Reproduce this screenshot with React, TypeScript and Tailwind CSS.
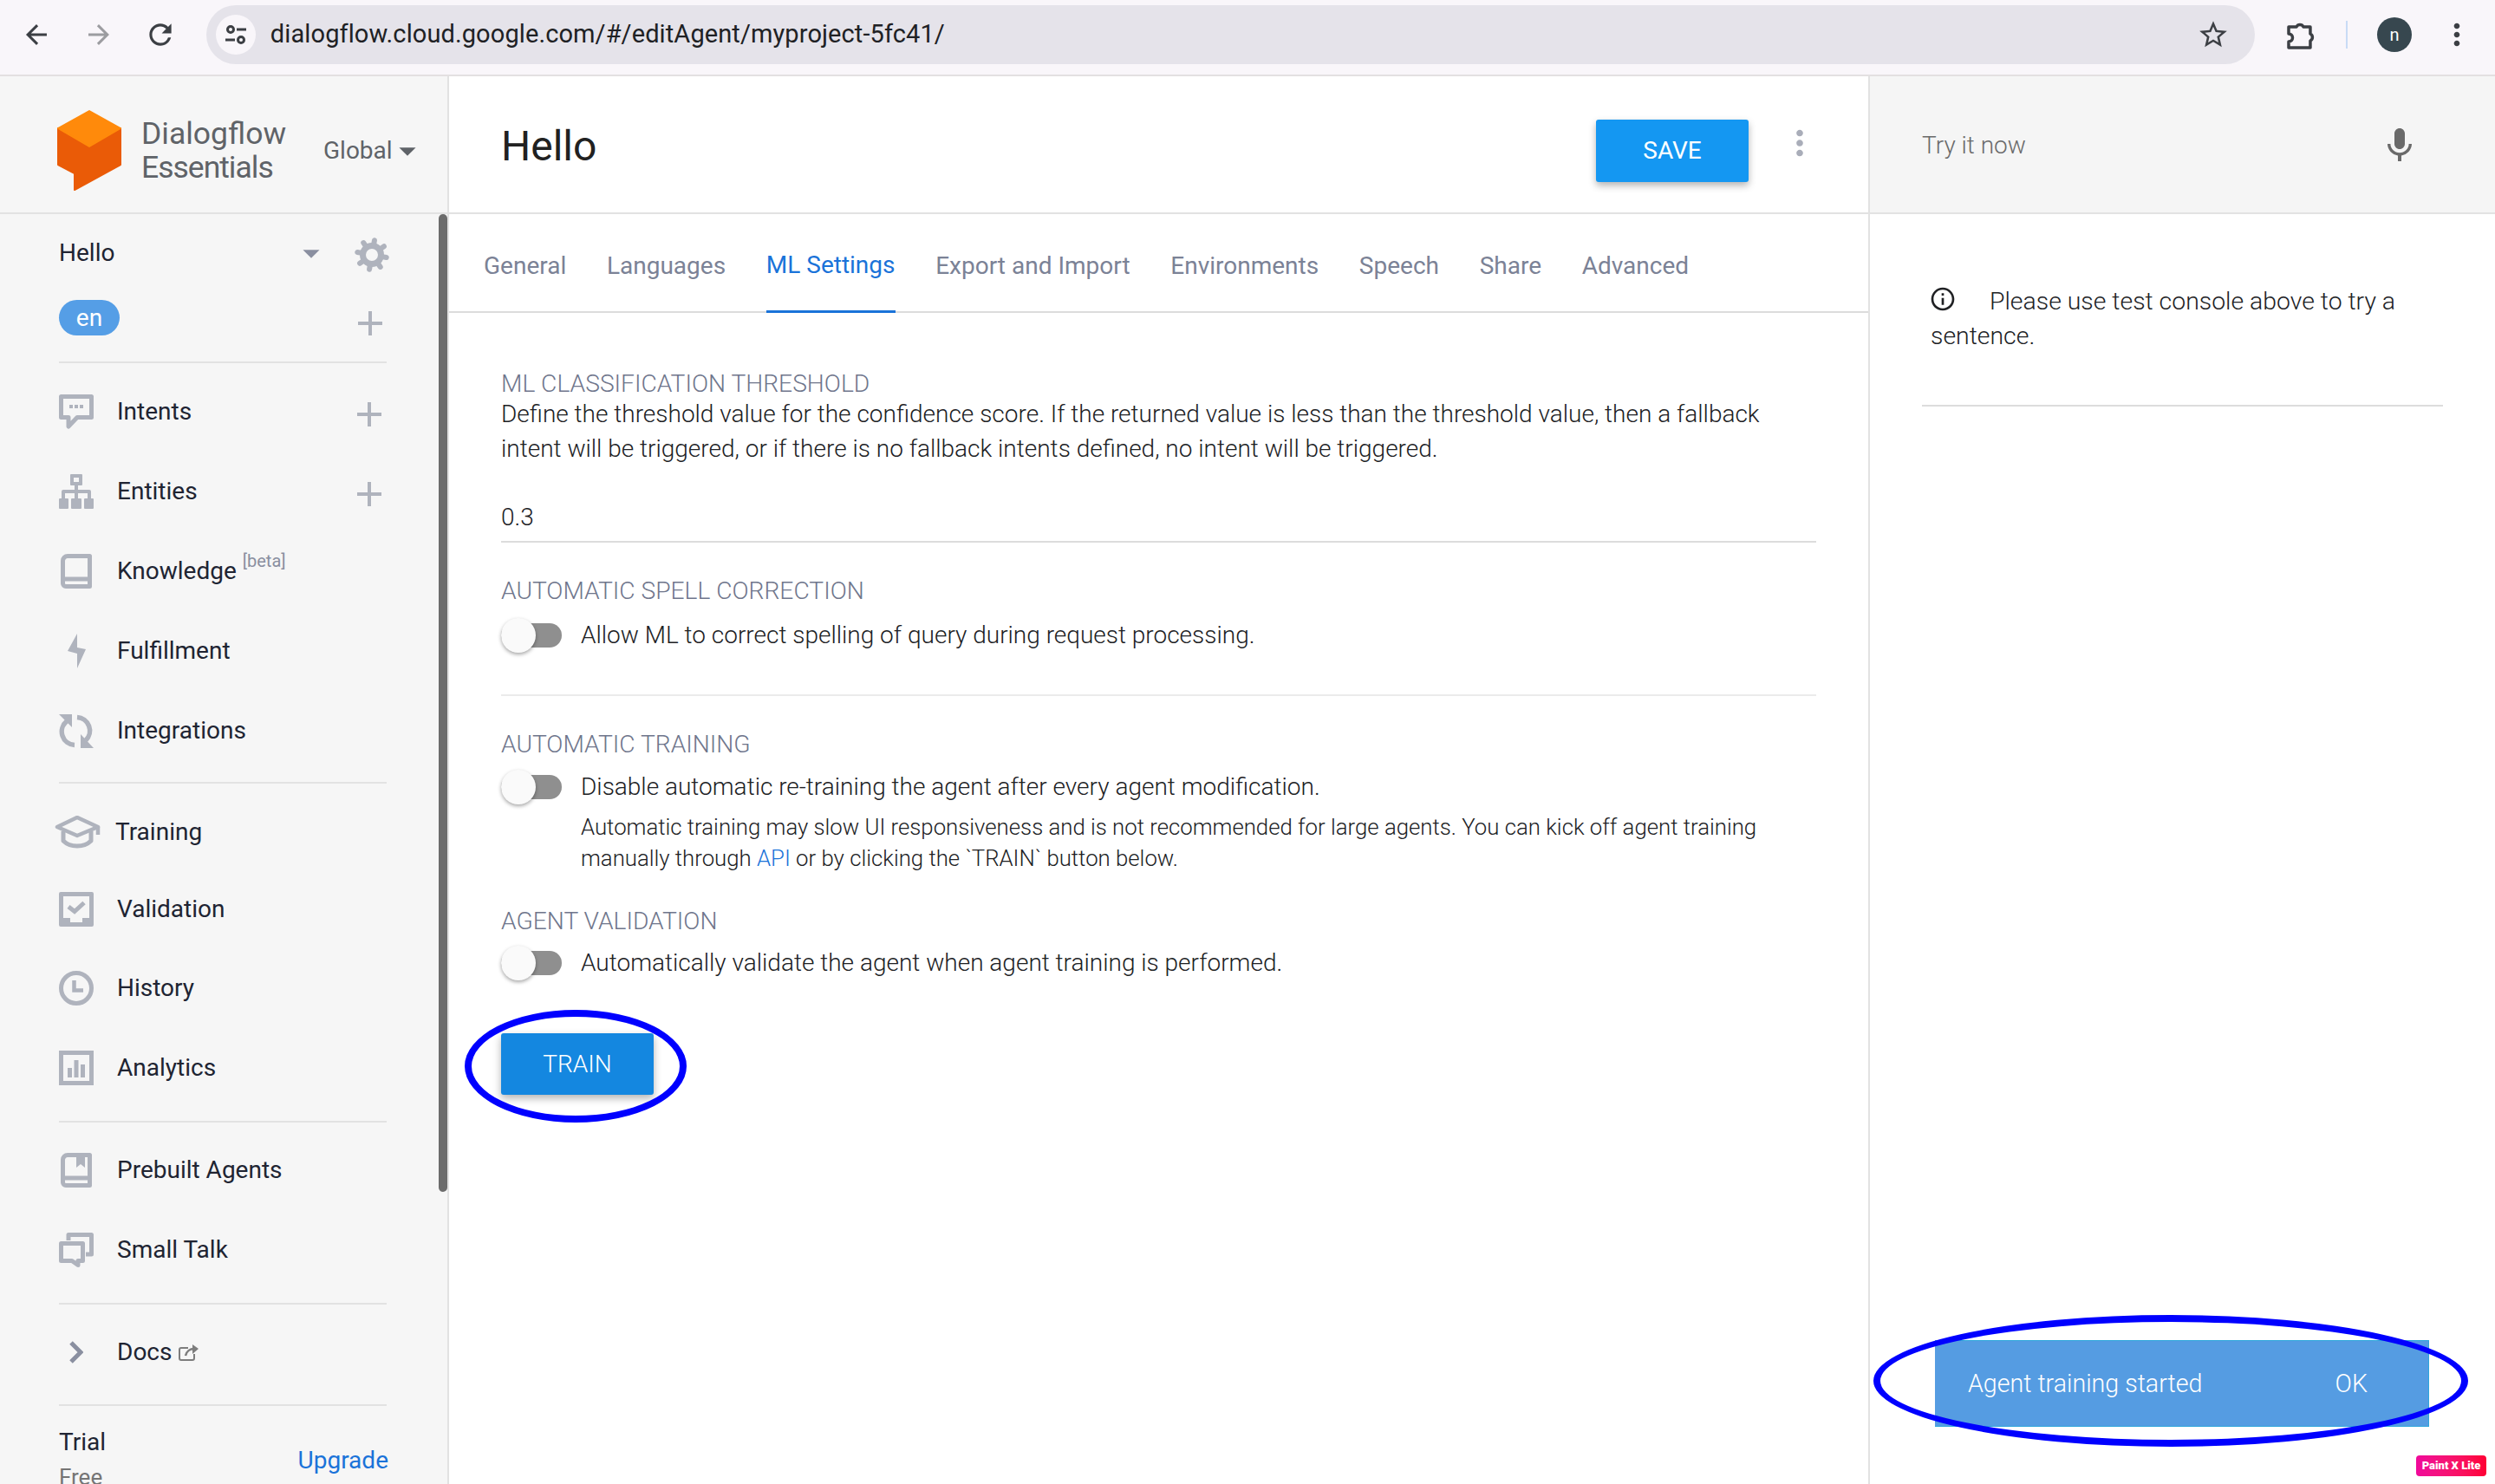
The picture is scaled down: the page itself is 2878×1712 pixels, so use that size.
import { ReactNode } from "react";
import { MdAdd, MdArrowBack, MdArrowDropDown, MdArrowForward, MdMic, MdMoreVert, MdOutlineInfo, MdRefresh, MdStarBorder } from "react-icons/md";

const IconIntents = () => (
  <svg width="40" height="41" viewBox="0 0 40 41" fill="none" stroke="#afb3bd" strokeWidth="5" strokeLinejoin="round">
    <path d="M2.5 2.5h35v24H21l-10 10.500v-10.500H2.500z" />
    <path d="M12 14h4M18 14h4M24 14h4" strokeWidth="4" />
  </svg>
);

const IconEntities = () => (
  <svg width="40" height="40" viewBox="0 0 40 40" fill="#afb3bd">
    <path fillRule="evenodd" d="M14 0h12a1 1 0 0 1 1 1v11a1 1 0 0 1-1 1h-4v5h13a2 2 0 0 1 2 2v8h2a1 1 0 0 1 1 1v10a1 1 0 0 1-1 1H30a1 1 0 0 1-1-1V29a1 1 0 0 1 1-1h3v-6H22v6h3a1 1 0 0 1 1 1v10a1 1 0 0 1-1 1H15a1 1 0 0 1-1-1V29a1 1 0 0 1 1-1h3v-6H7v6h3a1 1 0 0 1 1 1v10a1 1 0 0 1-1 1H1a1 1 0 0 1-1-1V29a1 1 0 0 1 1-1h2v-8a2 2 0 0 1 2-2h13v-5h-4a1 1 0 0 1-1-1V1a1 1 0 0 1 1-1zm3 4v5h6V4z" />
  </svg>
);

const IconBook = ({ mark }: { mark?: boolean }) => (
  <svg className="ml-[2px]" width="36" height="40" viewBox="0 0 36 40" fill="none" stroke="#afb3bd" strokeWidth="5">
    <path d="M8 2.500h25.500v35H6a3.500 3.500 0 0 1-3.500-3.500V8A5.500 5.500 0 0 1 8 2.500z" strokeLinejoin="round" />
    <path d="M5 29h29" strokeWidth="5" />
    {mark && <path d="M18 2h10v15l-5-4-5 4z" fill="#afb3bd" stroke="none" />}
  </svg>
);

const IconBolt = () => (
  <svg width="22" height="40" viewBox="0 0 22 40" fill="#afb3bd">
    <path d="M11 0v16l10 2-10 22V23L0 20z" />
  </svg>
);

const IconSync = () => (
  <svg width="40" height="40" viewBox="0 0 40 40" fill="none" stroke="#afb3bd" strokeWidth="5.500">
    <path d="M9 9A15.500 15.500 0 0 0 18 36.500" />
    <path d="M21 4.500A15.500 15.500 0 0 1 31 31" />
    <path d="M0 1h15v15z" fill="#afb3bd" stroke="none" />
    <path d="M25 24v16h15z" fill="#afb3bd" stroke="none" />
  </svg>
);

const IconCap = () => (
  <svg width="54" height="38" viewBox="0 0 54 38" fill="none" stroke="#afb3bd" strokeWidth="4.500" strokeLinejoin="round">
    <path d="M27 2 51 13 27 23 4 13z" />
    <path d="M11 18v11c8 8 24 8 32 0V18" strokeWidth="5" />
    <path d="M51 13v9" />
  </svg>
);

const IconCheckBox = () => (
  <svg width="40" height="40" viewBox="0 0 40 40" fill="#afb3bd">
    <path fillRule="evenodd" d="M2 0h36a2 2 0 0 1 2 2v36a2 2 0 0 1-2 2H2a2 2 0 0 1-2-2V2a2 2 0 0 1 2-2zm3 5v25h8v5h14v-5h8V5z" />
    <path d="M11 17l7 5.500 11-10" fill="none" stroke="#afb3bd" strokeWidth="5" />
  </svg>
);

const IconClock = () => (
  <svg width="40" height="40" viewBox="0 0 40 40" fill="none" stroke="#afb3bd" strokeWidth="5">
    <circle cx="20" cy="20" r="17.500" />
    <path d="M17.500 11v11.500H28" strokeWidth="4.500" />
  </svg>
);

const IconChart = () => (
  <svg width="40" height="40" viewBox="0 0 40 40" fill="#afb3bd">
    <path fillRule="evenodd" d="M0 0h40v40H0zm5 5v30h30V5z" />
    <path d="M10 20h5v11h-5zM17.500 11h5v20h-5zM25 16h5v15h-5z" />
  </svg>
);

const IconTalk = () => (
  <svg width="40" height="41" viewBox="0 0 40 41" fill="none" stroke="#afb3bd" strokeWidth="5" strokeLinejoin="round">
    <path d="M2.500 12.500h25v20H22v5l-7-5H2.500z" />
    <path d="M11 9V2.500h26.500V25H31" />
  </svg>
);

const IconChevron = () => (
  <svg width="16" height="26" viewBox="0 0 16 26" fill="none" stroke="#8a8fa0" strokeWidth="5">
    <path d="M2 2l11 11L2 24" />
  </svg>
);

const IconExternal = () => (
  <svg width="24" height="20" viewBox="0 0 24 20" fill="none" stroke="#7d7d7d" strokeWidth="2">
    <path d="M18 12v5a2 2 0 0 1-2 2H3a2 2 0 0 1-2-2V7a2 2 0 0 1 2-2h8" />
    <path d="M8 14c1-5 5-8 10-8" strokeWidth="2.500" />
    <path d="M16 1l7 5-7 6z" fill="#7d7d7d" stroke="none" />
  </svg>
);

const IconGear = () => (
  <svg width="40" height="40" viewBox="0 0 40 40" fill="none" stroke="#afb3bd">
    <circle cx="20" cy="20" r="10.500" strokeWidth="7" />
    {[10, 55, 100, 145, 190, 235, 280, 325].map((deg) => (
      <path key={deg} d="M20 8V3" strokeWidth="6" strokeLinecap="round" transform={`rotate(${deg} 20 20)`} />
    ))}
  </svg>
);

const NavRow = ({ icon, label, add, height = "h-[92px]" }: { icon: ReactNode; label: ReactNode; add?: boolean; height?: string }) => (
  <div className={`flex items-center ${height}`}>
    <div className="w-[67px] flex justify-start">{icon}</div>
    <div className="flex-1 text-[28px] text-[#202432]">{label}</div>
    {add && <MdAdd className="text-[#afb3bd] mr-[-4px] mt-[6px]" size={48} />}
  </div>
);

const Toggle = () => (
  <div className="relative w-[70px] h-[40px] shrink-0 flex items-center">
    <div className="w-full h-[28px] rounded-full bg-[#8f8f8f]" />
    <div className="absolute left-0 top-0 w-[40px] h-[40px] rounded-full bg-[#fafafa] shadow-[0_2px_4px_rgba(0,0,0,0.35)]" />
  </div>
);

const Heading = ({ children, className }: { children: ReactNode; className: string }) => (
  <div className={`h-[34px] leading-[34px] text-[28.200px] font-light text-[#6f768c] ${className}`}>{children}</div>
);

const tabs = ["General", "Languages", "ML Settings", "Export and Import", "Environments", "Speech", "Share", "Advanced"];

export default function App() {
  return (
    <div className="relative w-[2878px] h-[1712px] overflow-hidden bg-white font-[Roboto,sans-serif]">
      {/* browser chrome */}
      <div className="h-[88px] bg-[#f9f6fa] border-b-2 border-[#e3e0e1] flex items-center pl-[24px] pr-[24px] pb-[6px]">
        <MdArrowBack size={36} className="text-[#3c3f44]" />
        <MdArrowForward size={36} className="text-[#9c9ca0] ml-[36px]" />
        <MdRefresh size={38} className="text-[#3c3f44] ml-[34px]" />
        <div className="ml-[34px] w-[2366px] h-[68px] rounded-full bg-[#e5e3ea] flex items-center pl-[11px] pr-[29px]">
          <div className="w-[46px] h-[46px] rounded-full bg-[#f9f6fa] flex items-center justify-center">
            <svg width="28" height="28" viewBox="0 0 28 28" fill="none" stroke="#3c3f44" strokeWidth="3">
              <circle cx="8" cy="8" r="3.500" />
              <path d="M15 8h11M2 20h11" />
              <circle cx="20" cy="20" r="3.500" />
            </svg>
          </div>
          <div className="ml-[17px] flex-1 text-[29px] text-[#202124] tracking-[0.1px]">dialogflow.cloud.google.com/#/editAgent/myproject-5fc41/</div>
          <MdStarBorder size={38} className="text-[#3c3f44]" />
        </div>
        <svg className="ml-[36px]" width="34" height="36" viewBox="0 0 34 36" fill="none" stroke="#3c3f44" strokeWidth="3.500" strokeLinejoin="round">
          <path d="M3 9h9a4.500 4.500 0 0 1 8 0h8v8a4.500 4.500 0 0 1 0 8v8H3v-7a4.500 4.500 0 0 0 0-9z" />
        </svg>
        <div className="ml-[35px] w-[2px] h-[32px] bg-[#c9dbf5]" />
        <div className="ml-[34px] w-[40px] h-[40px] rounded-full bg-[#37474f] flex items-center justify-center text-[20px] text-white">n</div>
        <MdMoreVert size={40} className="text-[#3c3f44] ml-[32px]" />
      </div>

      <div className="flex h-[1624px]">
        {/* sidebar */}
        <aside className="relative w-[518px] shrink-0 bg-[#f6f6f6] border-r-2 border-[#e2e2e2] overflow-hidden">
          <div className="h-[159px] border-b-2 border-[#e2e2e2] flex items-center pl-[66px] pt-[14px]">
            <svg width="74" height="94" viewBox="-1 -1 74 94" strokeWidth="2" strokeLinejoin="round">
              <path d="M0 20 36 41 72 20V62L19 91V72L0 62z" fill="#ea5b07" stroke="#ea5b07" />
              <path d="M36 0 72 20 36 41 0 20z" fill="#ff8a0b" stroke="#ff8a0b" />
            </svg>
            <div className="ml-[23px] w-[170px] text-[35.500px] leading-[39px] text-[#5f6368]">
              <div>Dialogflow</div>
              <div className="tracking-[-1px]">Essentials</div>
            </div>
            <div className="ml-[40px] text-[28px] text-[#5f6368] flex items-center">
              Global
              <MdArrowDropDown size={46} className="text-[#5f6368] ml-[-6px] mr-[-10px]" />
            </div>
          </div>

          <div className="pl-[68px] pr-[70px]">
            <div className="h-[172px] border-b-2 border-[#e2e2e2]">
              <div className="h-[90px] flex items-center text-[28px] text-[#202432]">
                <div className="flex-1">Hello</div>
                <MdArrowDropDown size={46} className="text-[#8a8fa0] mr-[27px]" />
                <div className="mr-[-3px] mt-[4px]"><IconGear /></div>
              </div>
              <div className="mt-[9px] flex items-start justify-between">
                <div className="w-[70px] h-[41px] rounded-full bg-[#559ee6] flex items-center justify-center text-[28px] leading-none text-white">en</div>
                <MdAdd size={48} className="text-[#afb3bd] mt-[3px] mr-[-5px]" />
              </div>
            </div>

            <div className="pt-[10px] pb-[13px] border-b-2 border-[#e2e2e2]">
              <NavRow icon={<IconIntents />} label="Intents" add />
              <NavRow icon={<IconEntities />} label="Entities" add />
              <NavRow
                icon={<IconBook />}
                label={
                  <span>
                    Knowledge <sup className="text-[20px] text-[#8a8fa0] top-[-14px]">[beta]</sup>
                  </span>
                }
              />
              <NavRow icon={<div className="ml-[10px]"><IconBolt /></div>} label="Fulfillment" />
              <NavRow icon={<IconSync />} label="Integrations" />
            </div>

            <div className="pt-[12px] pb-[15px] border-b-2 border-[#e2e2e2]">
              <div className="flex items-center h-[88px]">
                <div className="w-[65px] ml-[-6px]"><IconCap /></div>
                <div className="text-[28px] text-[#202432] ml-[6px]">Training</div>
              </div>
              <NavRow icon={<IconCheckBox />} label="Validation" height="h-[90px]" />
              <NavRow icon={<IconClock />} label="History" />
              <NavRow icon={<IconChart />} label="Analytics" />
            </div>

            <div className="pt-[9px] pb-[15px] border-b-2 border-[#e2e2e2]">
              <NavRow icon={<IconBook mark />} label="Prebuilt Agents" />
              <NavRow icon={<IconTalk />} label="Small Talk" />
            </div>

            <div className="pt-[9px] pb-[14px] border-b-2 border-[#e2e2e2]">
              <NavRow
                icon={<div className="ml-[12px]"><IconChevron /></div>}
                label={
                  <span className="flex items-center gap-[8px]">
                    Docs <IconExternal />
                  </span>
                }
              />
            </div>

            <div className="pt-[24px] flex justify-between">
              <div>
                <div className="text-[28px] leading-[36px] text-[#202432]">Trial</div>
                <div className="text-[26px] leading-[36px] mt-[4px] text-[#757575]">Free</div>
              </div>
              <div className="text-[28px] text-[#1a73d9] mt-[18px] mr-[-2px]">Upgrade</div>
            </div>
          </div>

          <div className="absolute right-0 top-[159px] w-[10px] h-[1128px] rounded-full bg-[#6c6c6c]" />
        </aside>

        {/* agent settings */}
        <main className="flex-1 min-w-0">
          <div className="h-[159px] border-b-2 border-[#e2e2e2] flex items-center pl-[60px] pr-[61px]">
            <div className="flex-1 text-[48px] font-normal text-[#212121] mt-[4px]">Hello</div>
            <button className="w-[176px] h-[72px] mt-[14px] rounded-[3px] bg-[#1497f2] text-white text-[28px] shadow-[0_4px_8px_rgba(0,0,0,0.3)]">SAVE</button>
            <MdMoreVert size={46} className="text-[#a9adb9] ml-[36px] mr-[-5px] mb-[4px]" />
          </div>

          <div className="h-[114px] border-b-2 border-[#dcdcdc] flex pl-[40px]">
            {tabs.map((tab, i) => (
              <div
                key={tab}
                className={`h-[114px] flex items-center text-[28px] mr-[46.700px] pt-[6px] ${
                  i === 2 ? "text-[#1a73d9] border-b-[3px] border-[#1a73d9]" : "text-[#7b8296]"
                }`}
              >
                {tab}
              </div>
            ))}
          </div>

          <div className="pl-[60px] pr-[60px] pt-[65px]">
            <Heading className="">ML CLASSIFICATION THRESHOLD</Heading>
            <p className="text-[28px] leading-[40px] font-light text-[#202124] mt-[-2px]">
              Define the threshold value for the confidence score. If the returned value is less than the threshold value, then a fallback intent will be triggered, or if there is no fallback intents defined, no intent will be triggered.
            </p>
            <div className="mt-[38px] h-[50px] leading-[42px] text-[28px] font-light text-[#202124] border-b-2 border-[#dcdcdc]">0.3</div>

            <Heading className="mt-[39px]">AUTOMATIC SPELL CORRECTION</Heading>
            <div className="mt-[13px] flex items-center gap-[22px] text-[28px] font-light text-[#202124]">
              <Toggle />
              Allow ML to correct spelling of query during request processing.
            </div>
            <div className="mt-[47px] h-[2px] bg-[#ebebeb]" />

            <Heading className="mt-[39px]">AUTOMATIC TRAINING</Heading>
            <div className="mt-[11px] flex items-center gap-[22px] text-[28px] font-light text-[#202124]">
              <Toggle />
              Disable automatic re-training the agent after every agent modification.
            </div>
            <p className="mt-[7px] pl-[92px] text-[25.750px] leading-[36px] font-light text-[#202124]">
              Automatic training may slow UI responsiveness and is not recommended for large agents. You can kick off agent training manually through <span className="text-[#1a73d9]">API</span> or by clicking the `TRAIN` button below.
            </p>

            <Heading className="mt-[38px]">AGENT VALIDATION</Heading>
            <div className="mt-[10px] flex items-center gap-[22px] text-[28px] font-light text-[#202124]">
              <Toggle />
              Automatically validate the agent when agent training is performed.
            </div>

            <button className="block mt-[60px] w-[176px] h-[71px] rounded-[3px] bg-[#1487e0] text-white text-[28px] font-light shadow-[0_4px_10px_rgba(0,0,0,0.3)]">TRAIN</button>
          </div>
        </main>

        {/* try it now panel */}
        <aside className="w-[723px] shrink-0 border-l-2 border-[#e2e2e2]">
          <div className="h-[159px] bg-[#f5f5f5] border-b-2 border-[#e2e2e2] flex items-center justify-between pl-[60px] pr-[86px]">
            <div className="text-[28px] text-[#6a6a6a] font-light mt-[2px]">Try it now</div>
            <MdMic size={48} className="text-[#6a6a6a] mt-[3px]" />
          </div>
          <div className="pl-[60px] pr-[60px] pt-[81px]">
            <p className="pl-[10px] pb-[59px] text-[28.400px] leading-[40px] font-light text-[#202124] border-b-2 border-[#dcdcdc]">
              <MdOutlineInfo size={32} className="inline-block align-[-4px] mr-[38px] ml-[-2px]" />
              Please use test console above to try a sentence.
            </p>
          </div>
        </aside>
      </div>

      {/* snackbar + annotations */}
      <div className="absolute left-[2232px] top-[1546px] w-[570px] h-[100px] bg-[#559ce2] border-y border-r border-[#2ea6dc] flex items-center justify-between pl-[38px] pr-[70px] text-[28.600px] font-light text-white">
        <span>Agent training started</span>
        <span>OK</span>
      </div>
      <div className="absolute left-[536px] top-[1165px] w-[256px] h-[130px] rounded-[50%] border-[8px] border-[#0000ff]" />
      <div className="absolute left-[2161px] top-[1517px] w-[686px] h-[152px] rounded-[50%] border-[8px] border-[#0000ff]" />
      <div className="absolute left-[2787px] top-[1679px] w-[81px] h-[24px] rounded-[4px] bg-gradient-to-r from-[#f0089a] to-[#ff0033] flex items-center justify-center text-[13px] font-black text-white whitespace-nowrap">Paint X Lite</div>
    </div>
  );
}
